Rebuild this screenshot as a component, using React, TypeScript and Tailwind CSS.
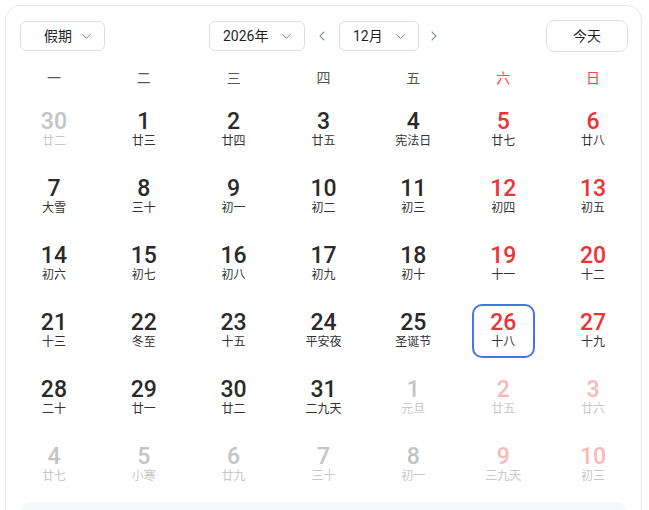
import { ChevronDown, ChevronLeft, ChevronRight } from "lucide-react";

type Day = { d: number; l: string; muted?: boolean; today?: boolean };

const rows: Day[][] = [
  [
    { d: 30, l: "廿二", muted: true }, { d: 1, l: "廿三" }, { d: 2, l: "廿四" }, { d: 3, l: "廿五" },
    { d: 4, l: "宪法日" }, { d: 5, l: "廿七" }, { d: 6, l: "廿八" },
  ],
  [
    { d: 7, l: "大雪" }, { d: 8, l: "三十" }, { d: 9, l: "初一" }, { d: 10, l: "初二" },
    { d: 11, l: "初三" }, { d: 12, l: "初四" }, { d: 13, l: "初五" },
  ],
  [
    { d: 14, l: "初六" }, { d: 15, l: "初七" }, { d: 16, l: "初八" }, { d: 17, l: "初九" },
    { d: 18, l: "初十" }, { d: 19, l: "十一" }, { d: 20, l: "十二" },
  ],
  [
    { d: 21, l: "十三" }, { d: 22, l: "冬至" }, { d: 23, l: "十五" }, { d: 24, l: "平安夜" },
    { d: 25, l: "圣诞节" }, { d: 26, l: "十八", today: true }, { d: 27, l: "十九" },
  ],
  [
    { d: 28, l: "二十" }, { d: 29, l: "廿一" }, { d: 30, l: "廿二" }, { d: 31, l: "二九天" },
    { d: 1, l: "元旦", muted: true }, { d: 2, l: "廿五", muted: true }, { d: 3, l: "廿六", muted: true },
  ],
  [
    { d: 4, l: "廿七", muted: true }, { d: 5, l: "小寒", muted: true }, { d: 6, l: "廿九", muted: true },
    { d: 7, l: "三十", muted: true }, { d: 8, l: "初一", muted: true }, { d: 9, l: "三九天", muted: true },
    { d: 10, l: "初三", muted: true },
  ],
];

const weekdays = ["一", "二", "三", "四", "五", "六", "日"];

function Select({ label, w, textPl }: { label: string; w: string; textPl: string }) {
  return (
    <div
      className={`flex items-center justify-between h-[30px] rounded-[6px] border border-[#dcdfe6] bg-white ${w} ${textPl} pr-[10px] text-[14px] text-[#1f1f1f]`}
    >
      <span>{label}</span>
      <ChevronDown className="h-[15px] w-[15px] text-[#7a8294]" strokeWidth={1.6} />
    </div>
  );
}

export default function App() {
  return (
    <div
      className="h-[510px] w-[649px] overflow-hidden bg-white pt-[5px] pl-[5px] pr-[7px]"
      style={{ fontFamily: "Roboto, 'Noto Sans CJK SC', sans-serif" }}
    >
      <div className="h-[540px] rounded-[15px] border border-[#e8e9ec] bg-white px-[3px] pt-[14px]">
        {/* Header */}
        <div className="flex items-center h-[32px] pl-[11px] pr-[10px]">
          <Select label="假期" w="w-[85px]" textPl="pl-[23px]" />
          <div className="ml-[104px] flex items-center">
            <Select label="2026年" w="w-[96px]" textPl="pl-[13px]" />
            <ChevronLeft className="mx-[9px] h-[16px] w-[16px] text-[#8a92a3]" strokeWidth={1.6} />
            <Select label="12月" w="w-[80px]" textPl="pl-[13px]" />
            <ChevronRight className="mx-[7px] h-[16px] w-[16px] text-[#8a92a3]" strokeWidth={1.6} />
          </div>
          <div className="ml-auto flex h-[32px] w-[82px] items-center justify-center rounded-[8px] border border-[#dcdfe6] text-[14px] text-[#1f1f1f]">
            今天
          </div>
        </div>

        {/* Weekdays */}
        <div className="mt-[8px] grid grid-cols-7 h-[36px] items-center">
          {weekdays.map((w, i) => (
            <div key={w} className={`text-center text-[14px] ${i >= 5 ? "text-[#f0444b]" : "text-[#555]"}`}>
              {w}
            </div>
          ))}
        </div>

        {/* Days */}
        <div className="grid grid-cols-7">
          {rows.flat().map((c, i) => {
            const weekend = i % 7 >= 5;
            const numColor = c.muted
              ? weekend ? "text-[#f8b9bb]" : "text-[#c4c4c4]"
              : weekend ? "text-[#ec3338]" : "text-[#2a2a2a]";
            const lunarColor = c.muted ? "text-[#c8c8c8]" : "text-[#333]";
            return (
              <div key={i} className="flex h-[67px] items-center justify-center">
                <div
                  className={`flex h-[54px] w-[63px] flex-col items-center justify-center rounded-[10px] ${
                    c.today ? "border-2 border-[#4a72ef]" : ""
                  }`}
                >
                  <span className={`text-[23px] font-medium leading-[24px] ${numColor}`}>{c.d}</span>
                  <span className={`text-[12px] leading-[15px] ${lunarColor}`}>{c.l}</span>
                </div>
              </div>
            );
          })}
        </div>

        <div className="mx-[12px] mt-[4px] h-[40px] rounded-[10px] bg-[#f7f8fa]" />
      </div>
    </div>
  );
}
